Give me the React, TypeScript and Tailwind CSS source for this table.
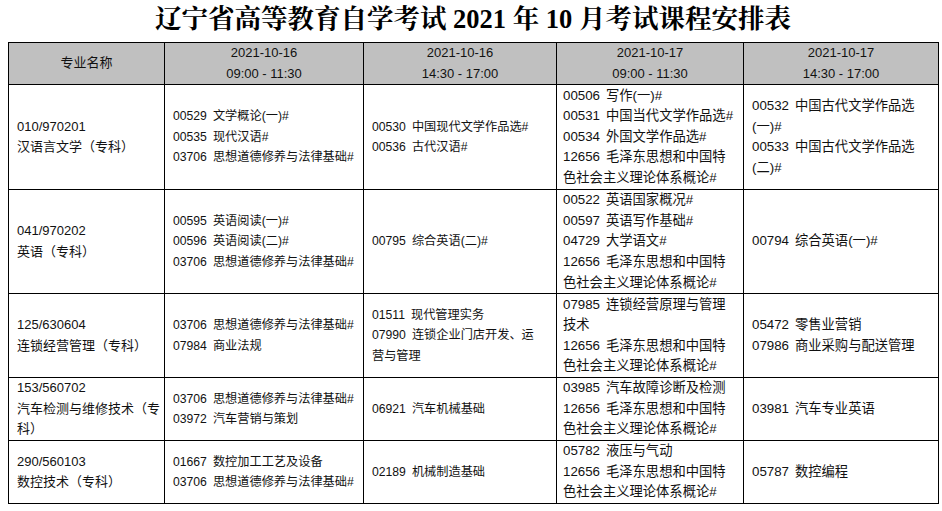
type Line = [string | null, string]

type Row = {
  major: string[]
  h: string
  cells: Line[][]
}

const rows: Row[] = [
  {
    major: ['010/970201', '汉语言文学（专科）'],
    h: 'h-[105px]',
    cells: [
      [['00529', '文学概论(一)#'], ['00535', '现代汉语#'], ['03706', '思想道德修养与法律基础#']],
      [['00530', '中国现代文学作品选#'], ['00536', '古代汉语#']],
      [
        ['00506', '写作(一)#'],
        ['00531', '中国当代文学作品选#'],
        ['00534', '外国文学作品选#'],
        ['12656', '毛泽东思想和中国特'],
        [null, '色社会主义理论体系概论#'],
      ],
      [['00532', '中国古代文学作品选'], [null, '(一)#'], ['00533', '中国古代文学作品选'], [null, '(二)#']],
    ],
  },
  {
    major: ['041/970202', '英语（专科）'],
    h: 'h-[104px]',
    cells: [
      [['00595', '英语阅读(一)#'], ['00596', '英语阅读(二)#'], ['03706', '思想道德修养与法律基础#']],
      [['00795', '综合英语(二)#']],
      [
        ['00522', '英语国家概况#'],
        ['00597', '英语写作基础#'],
        ['04729', '大学语文#'],
        ['12656', '毛泽东思想和中国特'],
        [null, '色社会主义理论体系概论#'],
      ],
      [['00794', '综合英语(一)#']],
    ],
  },
  {
    major: ['125/630604', '连锁经营管理（专科）'],
    h: 'h-[84px]',
    cells: [
      [['03706', '思想道德修养与法律基础#'], ['07984', '商业法规']],
      [['01511', '现代管理实务'], ['07990', '连锁企业门店开发、运'], [null, '营与管理']],
      [
        ['07985', '连锁经营原理与管理'],
        [null, '技术'],
        ['12656', '毛泽东思想和中国特'],
        [null, '色社会主义理论体系概论#'],
      ],
      [['05472', '零售业营销'], ['07986', '商业采购与配送管理']],
    ],
  },
  {
    major: ['153/560702', '汽车检测与维修技术（专', '科）'],
    h: 'h-[63px]',
    cells: [
      [['03706', '思想道德修养与法律基础#'], ['03972', '汽车营销与策划']],
      [['06921', '汽车机械基础']],
      [['03985', '汽车故障诊断及检测'], ['12656', '毛泽东思想和中国特'], [null, '色社会主义理论体系概论#']],
      [['03981', '汽车专业英语']],
    ],
  },
  {
    major: ['290/560103', '数控技术（专科）'],
    h: 'h-[63px]',
    cells: [
      [['01667', '数控加工工艺及设备'], ['03706', '思想道德修养与法律基础#']],
      [['02189', '机械制造基础']],
      [['05782', '液压与气动'], ['12656', '毛泽东思想和中国特'], [null, '色社会主义理论体系概论#']],
      [['05787', '数控编程']],
    ],
  },
]

const heads = [
  ['2021-10-16', '09:00 - 11:30'],
  ['2021-10-16', '14:30 - 17:00'],
  ['2021-10-17', '09:00 - 11:30'],
  ['2021-10-17', '14:30 - 17:00'],
]

function Course({ lines, wide }: { lines: Line[]; wide: boolean }) {
  return (
    <div className={wide ? 'text-[13.3px]' : 'text-[12.2px]'}>
      {lines.map(([code, name], i) => (
        <div key={i} className="whitespace-nowrap">
          {code && <span className="mr-[6px]">{code}</span>}
          <span>{name}</span>
        </div>
      ))}
    </div>
  )
}

export default function App() {
  return (
    <div className="w-[942px] h-[511px] bg-white text-[#111] font-['Liberation_Sans','Noto_Sans_CJK_SC',sans-serif]">
      {/* title */}
      <div className="h-[42px] flex items-center justify-center pb-[2px] pl-[4px] text-[26.5px] font-bold text-black font-['Liberation_Serif','Noto_Serif_CJK_SC','Noto_Sans_CJK_SC',serif]">
        辽宁省高等教育自学考试 2021 年 10 月考试课程安排表
      </div>

      <table className="ml-2 w-[930px] table-fixed border-collapse text-[13px] leading-[20.6px]">
        <colgroup>
          <col className="w-[156px]" />
          <col className="w-[199px]" />
          <col className="w-[193px]" />
          <col className="w-[187px]" />
          <col className="w-[195px]" />
        </colgroup>
        <thead>
          <tr className="h-[42px] bg-[#c0c0c0]">
            <th className="border border-black font-normal text-center align-middle">专业名称</th>
            {heads.map(([d, t], i) => (
              <th key={i} className="border border-black font-normal text-center align-middle">
                <div>{d}</div>
                <div>{t}</div>
              </th>
            ))}
          </tr>
        </thead>
        <tbody>
          {rows.map((r, i) => (
            <tr key={i} className={r.h}>
              <td className="border border-black pl-2 align-middle">
                {r.major.map((m, j) => (
                  <div key={j} className="whitespace-nowrap">{m}</div>
                ))}
              </td>
              {r.cells.map((c, j) => (
                <td key={j} className={`border border-black align-middle ${j === 2 ? 'pl-[6px]' : 'pl-2'}`}>
                  <Course lines={c} wide={j >= 2} />
                </td>
              ))}
            </tr>
          ))}
        </tbody>
      </table>
    </div>
  )
}
